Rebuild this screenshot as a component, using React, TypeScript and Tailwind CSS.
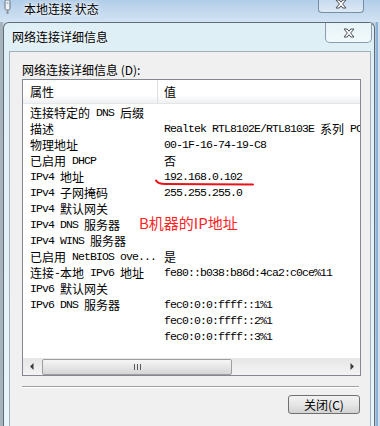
import React from "react";

const CJK = /([\u3000-\u9fff\uff00-\uffef]+)/;

function Mixed({ text }: { text: string }) {
  const parts = text.split(CJK);
  return (
    <>
      {parts.map((p, i) =>
        p === "" ? null : CJK.test(p) ? (
          <span key={i} className="inline-block h-[16px] leading-[16px] align-top font-['Noto_Sans_CJK_SC',sans-serif] text-[12px]">
            {p}
          </span>
        ) : (
          <span key={i} className="inline-block h-[16px] leading-[16px] align-top font-['Liberation_Mono',monospace] text-[11.5px] tracking-[-0.9px]">
            {p}
          </span>
        )
      )}
    </>
  );
}

const rows: [string, string][] = [
  ["连接特定的 DNS 后缀", ""],
  ["描述", "Realtek RTL8102E/RTL8103E 系列 PCI-E Fast Ethernet NIC"],
  ["物理地址", "00-1F-16-74-19-C8"],
  ["已启用 DHCP", "否"],
  ["IPv4 地址", "192.168.0.102"],
  ["IPv4 子网掩码", "255.255.255.0"],
  ["IPv4 默认网关", ""],
  ["IPv4 DNS 服务器", ""],
  ["IPv4 WINS 服务器", ""],
  ["已启用 NetBIOS ove...", "是"],
  ["连接-本地 IPv6 地址", "fe80::b038:b86d:4ca2:c0ce%11"],
  ["IPv6 默认网关", ""],
  ["IPv6 DNS 服务器", "fec0:0:0:ffff::1%1"],
  ["", "fec0:0:0:ffff::2%1"],
  ["", "fec0:0:0:ffff::3%1"],
];

function CloseX() {
  return (
    <svg width="12" height="10" viewBox="0 0 12 10">
      <path
        d="M1 1 H4.2 L6 3.2 L7.8 1 H11 L7.6 5 L11 9 H7.8 L6 6.8 L4.2 9 H1 L4.4 5 Z"
        fill="#ffffff"
        stroke="#4a4f55"
        strokeWidth="1"
        strokeLinejoin="round"
      />
    </svg>
  );
}

export default function App() {
  return (
    <div className="relative w-[380px] h-[426px] overflow-hidden bg-[#c4d8ec] font-['Noto_Sans_CJK_SC',sans-serif] text-[12px] text-black">
      {/* parent window title bar */}
      <div className="h-[22px] flex items-start bg-gradient-to-b from-[#b2cde9] to-[#d2e3f3]">
        <svg className="ml-[3px]" width="9" height="16" viewBox="0 0 9 16">
          <rect x="2" y="0" width="5" height="10" rx="1.5" fill="#eef2f5" stroke="#66737f" strokeWidth="1" />
          <rect x="3.5" y="10" width="2" height="4" fill="#8b96a0" />
          <line x1="3.5" y1="3" x2="5.5" y2="3" stroke="#66737f" strokeWidth="0.8" />
        </svg>
        <div className="ml-[12px] pt-[1px] leading-[16px] [text-shadow:0_0_6px_#fff,0_0_3px_#fff]">
          本地连接 状态
        </div>
        <div className="ml-auto mr-[16px] w-[46px] h-[13px] border border-t-0 border-[#7b8da2] rounded-b-[4px] bg-gradient-to-b from-[#c6dbef] to-[#dde9f5] flex justify-center items-end overflow-hidden">
          <div className="mb-[3px]">
            <CloseX />
          </div>
        </div>
      </div>

      <div className="flex h-[404px]">
        <div className="w-[3px] bg-[#a7b2bc]" />
        {/* dialog */}
        <div className="w-[372px] flex flex-col border border-b-0 border-[#5f6b77] rounded-tl-[6px] rounded-tr-[6px] bg-gradient-to-b from-[#deeff6] to-[#e8f5fa]">
          <div className="h-[28px] flex items-start">
            <div className="ml-[8px] mt-[6px] leading-[16px] [text-shadow:0_0_6px_#fff]">网络连接详细信息</div>
            <div className="ml-auto mr-[2px] w-[47px] h-[20px] border border-t-0 border-[#8d9cac] rounded-b-[5px] bg-gradient-to-b from-[#e6f3f8] to-[#f2f9fc] flex items-center justify-center">
              <CloseX />
            </div>
          </div>
          {/* client area */}
          <div className="flex-1 ml-[5px] mr-[3px] border border-b-0 border-[#a3afbb] bg-[#f0f0f0] flex flex-col pl-[12px] pr-[9px]">
            <div className="mt-[10px] h-[16px] leading-[16px]">网络连接详细信息 (D):</div>
            {/* list box */}
            <div className="mt-[1px] h-[297px] border border-[#828790] bg-white flex flex-col">
              <div className="h-[24px] flex bg-gradient-to-b from-white from-[65%] to-[#eff0f2] border-b border-[#e4e6e9]">
                <div className="w-[135px] pl-[7px] pt-[1px] flex items-center border-r border-[#dcdfe3]">属性</div>
                <div className="flex-1 pl-[6px] pt-[1px] flex items-center">值</div>
              </div>
              <div className="flex-1 pt-[1px] flex flex-col">
                {rows.map(([k, v], i) => (
                  <div key={i} className="h-[16px] flex items-start pl-[7px] whitespace-pre leading-[16px]">
                    <div className="w-[134px] h-[16px] shrink-0 overflow-hidden">
                      <Mixed text={k} />
                    </div>
                    <div className="flex-1 h-[16px] min-w-0 overflow-hidden">
                      <Mixed text={v} />
                    </div>
                  </div>
                ))}
              </div>
              {/* horizontal scrollbar */}
              <div className="h-[17px] flex items-center bg-gradient-to-b from-[#e6e6e6] to-[#f4f4f4]">
                <div className="w-[17px] h-full flex items-center justify-center">
                  <svg width="4" height="7" viewBox="0 0 4 7">
                    <path d="M3.5 0 L0 3.5 L3.5 7 Z" fill="#3a3a3a" />
                  </svg>
                </div>
                <div className="ml-[2px] w-[190px] h-[16px] rounded-[2px] border border-[#9e9e9e] bg-gradient-to-b from-[#f6f6f6] to-[#d6d6d6] flex items-center justify-center gap-[2px]">
                  <div className="w-[1px] h-[6px] bg-[#5a5a5a]" />
                  <div className="w-[1px] h-[6px] bg-[#5a5a5a]" />
                  <div className="w-[1px] h-[6px] bg-[#5a5a5a]" />
                </div>
                <div className="flex-1" />
                <div className="w-[17px] h-full flex items-center justify-center">
                  <svg width="4" height="7" viewBox="0 0 4 7">
                    <path d="M0.5 0 L4 3.5 L0.5 7 Z" fill="#3a3a3a" />
                  </svg>
                </div>
              </div>
            </div>
            {/* separator */}
            <div className="mt-[10px] mr-[2px] h-[2px] border-t border-b border-t-[#a0a0a0] border-b-white" />
            {/* button */}
            <div className="mt-[7px] self-end mr-[1px] w-[72px] h-[19px] rounded-[3px] border border-[#707070] bg-gradient-to-b from-[#f2f2f2] via-[#e6e6e6] to-[#d2d2d2] flex items-center justify-center leading-[16px]">
              关闭(C)
            </div>
          </div>
        </div>
        <div className="w-[5px] flex">
          <div className="w-[1px] bg-[#b6c7d7]" />
          <div className="w-[2px] bg-[#86b2dc]" />
          <div className="w-[2px] bg-[#d2dde8]" />
        </div>
      </div>

      {/* red annotations */}
      <svg className="absolute left-[150px] top-[175px]" width="110" height="15" viewBox="0 0 110 15">
        <path d="M6 5.5 Q8 9 15 9 L103 9.5" fill="none" stroke="#ea1219" strokeWidth="2" strokeLinecap="round" />
      </svg>
      <div className="absolute left-[139px] top-[213px] leading-[20px] text-[15px] text-[#ff2424] font-['Noto_Sans_CJK_SC',sans-serif]">
        B机器的IP地址
      </div>
    </div>
  );
}
